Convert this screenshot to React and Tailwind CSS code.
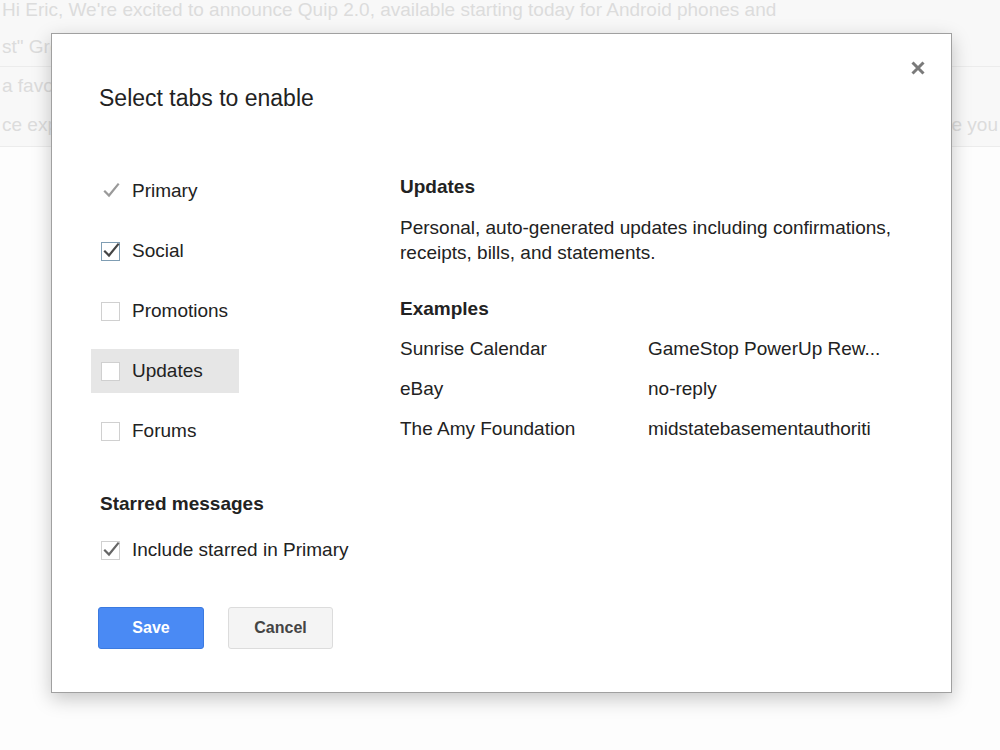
import React from "react";

const font = { fontFamily: '"Liberation Sans", Arial, sans-serif' };

function Check({ color = "#555", className = "" }) {
  return (
    <svg className={className} width="20" height="20" viewBox="0 0 20 20" fill="none">
      <path d="M4 10.5 L8 14.5 L17 3.5" stroke={color} strokeWidth="2.2" strokeLinecap="square" />
    </svg>
  );
}

function Box({ checked, boxColor = "#c8c8c8", checkColor = "#555" }) {
  return (
    <div className="relative w-[19px] h-[19px] shrink-0">
      <div className="absolute inset-0 border bg-white" style={{ borderColor: boxColor }} />
      {checked && <Check color={checkColor} className="absolute left-[0px] top-[-1px]" />}
    </div>
  );
}

function Row({ label, kind, active }) {
  return (
    <div
      className={`flex items-center h-[44px] w-[148px] pl-[10px] gap-[12px] ${
        active ? "bg-[#e6e6e6]" : ""
      }`}
    >
      {kind === "plain" ? (
        <div className="w-[19px] h-[19px] shrink-0 relative">
          <Check color="#9a9a9a" className="absolute left-[0px] top-[-1px]" />
        </div>
      ) : (
        <Box
          checked={kind === "checked"}
          boxColor={kind === "checked" ? "#7f9db3" : "#d0d0d0"}
          checkColor="#444"
        />
      )}
      <span className="text-[19px] leading-[24px] text-[#222]">{label}</span>
    </div>
  );
}

export default function App() {
  return (
    <div className="relative w-[1000px] h-[750px] overflow-hidden bg-[#fdfdfd]" style={font}>
      {/* background content */}
      <div className="bg-[#f8f8f8] -mt-[9px] text-[19px] text-[#dcdcdc] whitespace-nowrap">
        <div className="h-[38px] flex items-center pl-[2px]">
          Hi Eric, We're excited to announce Quip 2.0, available starting today for Android phones and
        </div>
        <div className="h-[38px] flex items-center pl-[2px] border-b border-[#ececec]">
          st" Group Chat
        </div>
        <div className="h-[38px] flex items-center pl-[2px]">a favorite</div>
        <div className="h-[42px] flex items-center pl-[2px] pr-[2px] justify-between border-b border-[#ececec]">
          <span>ce experience</span>
          <span>invite you</span>
        </div>
      </div>

      {/* modal */}
      <div className="absolute left-[51px] top-[33px] w-[901px] h-[660px] bg-white border border-[#a0a0a0] shadow-[0_6px_18px_rgba(0,0,0,0.22)] pt-[50px] pl-[47px] pr-[48px]">
        <svg
          className="absolute left-[859px] top-[27px]"
          width="14"
          height="14"
          viewBox="0 0 14 14"
        >
          <path d="M1.5 1.5 L12.5 12.5 M12.5 1.5 L1.5 12.5" stroke="#7a7a7a" strokeWidth="3" />
        </svg>

        <div className="text-[23px] leading-[28px] text-[#222]">Select tabs to enable</div>

        <div className="flex mt-[57px]">
          <div className="w-[309px] -ml-[8px] shrink-0">
            <div className="flex flex-col gap-[16px]">
              <Row label="Primary" kind="plain" />
              <Row label="Social" kind="checked" />
              <Row label="Promotions" kind="empty" />
              <Row label="Updates" kind="empty" active />
              <Row label="Forums" kind="empty" />
            </div>
            <div className="pl-[9px] mt-[39px] text-[19px] leading-[24px] font-bold text-[#222]">
              Starred messages
            </div>
            <div className="pl-[10px] mt-[22px] flex items-center gap-[12px]">
              <Box checked boxColor="#d0d0d0" checkColor="#666" />
              <span className="text-[19px] leading-[24px] text-[#222]">Include starred in Primary</span>
            </div>
            <div className="flex gap-[24px] pl-[7px] mt-[45px]">
              <button className="w-[106px] h-[42px] rounded-[3px] bg-[#4a8af4] border border-[#3b7ae0] text-white text-[16px] font-bold">
                Save
              </button>
              <button className="w-[105px] h-[42px] rounded-[3px] bg-[#f4f4f4] border border-[#dcdcdc] text-[#444] text-[16px] font-bold">
                Cancel
              </button>
            </div>
          </div>

          <div className="flex-1 text-[#222]">
            <div className="mt-[6px] text-[19px] leading-[24px] font-bold">Updates</div>
            <div className="mt-[16px] text-[19px] leading-[25px] w-[505px]">
              Personal, auto-generated updates including confirmations, receipts, bills, and statements.
            </div>
            <div className="mt-[32px] text-[19px] leading-[24px] font-bold">Examples</div>
            <div className="mt-[8px] text-[19px]">
              {[
                ["Sunrise Calendar", "GameStop PowerUp Rew..."],
                ["eBay", "no-reply"],
                ["The Amy Foundation", "midstatebasementauthoriti"],
              ].map(([a, b]) => (
                <div key={a} className="flex h-[40px] items-center">
                  <span className="w-[248px]">{a}</span>
                  <span>{b}</span>
                </div>
              ))}
            </div>
          </div>
        </div>
      </div>
    </div>
  );
}
